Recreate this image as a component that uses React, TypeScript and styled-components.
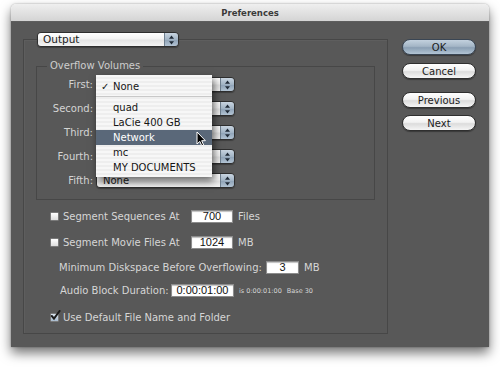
import React from 'react'
import styled, { createGlobalStyle, css } from 'styled-components'

const GlobalStyle = createGlobalStyle`
    html,
    body {
        margin: 0;
        background: #ffffff;
    }

    body {
        font-family: 'DejaVu Sans', 'Noto Sans', sans-serif;
    }
`

// the open menu covers the first four popups, only the last one shows its value
const volumes = [
    ['First:', ''],
    ['Second:', ''],
    ['Third:', ''],
    ['Fourth:', ''],
    ['Fifth:', 'None'],
]

const menuItems = ['quad', 'LaCie 400 GB', 'Network', 'mc', 'MY DOCUMENTS']

function Arrows() {
    return (
        <svg width="7" height="10" viewBox="0 0 7 10">
            <path d="M3.5 0.5 L6 3.8 L1 3.8 Z" fill="#1f2a36" />
            <path d="M3.5 9.5 L6 6.2 L1 6.2 Z" fill="#1f2a36" />
        </svg>
    )
}

function Cursor() {
    return (
        <svg width="11" height="16" viewBox="0 0 11 16">
            <path
                d="M1 1 L1 13 L3.8 10.4 L5.8 14.8 L7.6 14 L5.7 9.7 L9.4 9.7 Z"
                fill="#000"
                stroke="#fff"
                strokeWidth="1"
                strokeLinejoin="round"
            />
        </svg>
    )
}

function CheckMark() {
    return (
        <svg width="11" height="12" viewBox="0 0 11 12">
            <path
                d="M1.8 6 L4 8.6 L9.6 1"
                fill="none"
                stroke="#1b1b1b"
                strokeWidth="2"
                strokeLinecap="round"
            />
        </svg>
    )
}

export default function App() {
    return (
        <Page>
            <GlobalStyle />
            <Window>
                <TitleBar>Preferences</TitleBar>
                <Content>
                    <Main>
                        <Popup $width={142} $size={10.5} $indent={6} $raised>
                            <PopupText>Output</PopupText>
                            <PopupArrow>
                                <Arrows />
                            </PopupArrow>
                        </Popup>
                        <Panel>
                            <GroupBox>
                                <Legend>Overflow Volumes</Legend>
                                <VolumeGrid>
                                    {volumes.map(([label, value], i) => (
                                        <React.Fragment key={label}>
                                            <VolumeLabel>{label}</VolumeLabel>
                                            <VolumeCell>
                                                <Popup $width={139} $size={10} $indent={7}>
                                                    <PopupText>{value}</PopupText>
                                                    <PopupArrow>
                                                        <Arrows />
                                                    </PopupArrow>
                                                </Popup>
                                                {i === 0 && (
                                                    <Menu>
                                                        <MenuItem>
                                                            <Tick>✓</Tick>None
                                                        </MenuItem>
                                                        <MenuSeparator />
                                                        {menuItems.map((item) => (
                                                            <MenuItem
                                                                key={item}
                                                                $active={item === 'Network'}
                                                            >
                                                                {item}
                                                            </MenuItem>
                                                        ))}
                                                        <CursorSpot>
                                                            <Cursor />
                                                        </CursorSpot>
                                                    </Menu>
                                                )}
                                            </VolumeCell>
                                        </React.Fragment>
                                    ))}
                                </VolumeGrid>
                            </GroupBox>

                            <OptionRow $top={10} $indent={14}>
                                <CheckBox />
                                <OptionText $width={128}>Segment Sequences At</OptionText>
                                <Field $width={42}>700</Field>
                                <Unit>Files</Unit>
                            </OptionRow>
                            <OptionRow $top={13} $indent={14}>
                                <CheckBox />
                                <OptionText $width={128}>Segment Movie Files At</OptionText>
                                <Field $width={42}>1024</Field>
                                <Unit>MB</Unit>
                            </OptionRow>
                            <OptionRow $top={12} $indent={23}>
                                <OptionText $width={207}>
                                    Minimum Diskspace Before Overflowing:
                                </OptionText>
                                <Field $width={33}>3</Field>
                                <Unit>MB</Unit>
                            </OptionRow>
                            <OptionRow $top={10} $indent={24}>
                                <OptionText $width={111}>Audio Block Duration:</OptionText>
                                <Field $width={63}>0:00:01:00</Field>
                                <Note>
                                    is 0:00:01:00 <span>Base 30</span>
                                </Note>
                            </OptionRow>
                            <OptionRow $top={14} $indent={14}>
                                <CheckBox $checked>
                                    <CheckMark />
                                </CheckBox>
                                <OptionText>Use Default File Name and Folder</OptionText>
                            </OptionRow>
                        </Panel>
                    </Main>

                    <Side>
                        <AquaButton $default $top={0}>
                            OK
                        </AquaButton>
                        <AquaButton $top={8}>Cancel</AquaButton>
                        <AquaButton $top={13}>Previous</AquaButton>
                        <AquaButton $top={7}>Next</AquaButton>
                    </Side>
                </Content>
            </Window>
        </Page>
    )
}

const Page = styled.div`
    box-sizing: border-box;
    height: 367px;
    padding: 4px 0 0 11px;
    width: 500px;
`

const Window = styled.div`
    border-radius: 5px 5px 0 0;
    box-shadow: 0 6px 12px rgba(0, 0, 0, 0.55), 0 0 2px rgba(0, 0, 0, 0.35);
    display: flex;
    flex-direction: column;
    height: 343px;
    overflow: hidden;
    width: 478px;
`

const TitleBar = styled.div`
    align-items: center;
    background: linear-gradient(#efefef, #d4d4d4);
    border-bottom: 1px solid #5e5e5e;
    box-sizing: border-box;
    color: #3a3a3a;
    display: flex;
    flex-shrink: 0;
    font-size: 8.5px;
    font-weight: bold;
    height: 18px;
    justify-content: center;
    padding-top: 1px;
`

const Content = styled.div`
    background: #585858;
    display: flex;
    flex: 1;
    gap: 14px;
    padding: 10px 13px 13px 12px;
`

const Main = styled.div`
    display: flex;
    flex-direction: column;
    width: 365px;
`

const Popup = styled.div<{
    $width: number
    $size: number
    $indent: number
    $raised?: boolean
}>`
    border: 1px solid #2e2e2e;
    border-radius: 4px;
    box-shadow: 0 1px 1px rgba(0, 0, 0, 0.3);
    box-sizing: border-box;
    color: #1a1a1a;
    display: flex;
    flex-shrink: 0;
    font-size: ${({ $size }) => $size}px;
    height: 15px;
    overflow: hidden;
    width: ${({ $width }) => $width}px;

    & > span:first-child {
        padding-left: ${({ $indent }) => $indent - 1}px;
    }

    ${({ $raised }) =>
        $raised &&
        css`
            margin-left: 14px;
            position: relative;
            z-index: 1;
        `}
`

const PopupText = styled.span`
    align-items: center;
    background: linear-gradient(#ffffff, #f3f3f3 45%, #e4e4e4 55%, #f4f4f4);
    display: flex;
    flex: 1;
    line-height: 13px;
`

const PopupArrow = styled.span`
    align-items: center;
    background: linear-gradient(#c9d5e1, #a2b4c5 50%, #8ea2b6 52%, #b3c4d4);
    border-left: 1px solid #6f7f8f;
    display: flex;
    justify-content: center;
    width: 13px;
`

const Panel = styled.div`
    border: 1px solid #474747;
    box-shadow: inset 1px 1px 0 rgba(255, 255, 255, 0.04);
    display: flex;
    flex: 1;
    flex-direction: column;
    margin-top: -8px;
    padding: 20px 12px 0 12px;
`

const GroupBox = styled.fieldset`
    border: 1px solid #474747;
    margin: 0;
    min-width: 0;
    padding: 5px 0 11px 0;
`

const Legend = styled.legend`
    color: #cdcdcd;
    font-size: 10px;
    line-height: 12px;
    margin-left: 10px;
    padding: 0 3px;
`

const VolumeGrid = styled.div`
    display: grid;
    grid-template-columns: 56px 139px;
    column-gap: 3px;
    row-gap: 9px;
`

const VolumeLabel = styled.div`
    color: #d4d4d4;
    font-size: 10px;
    line-height: 15px;
    text-align: right;
`

const VolumeCell = styled.div`
    position: relative;
`

const Menu = styled.div`
    background: repeating-linear-gradient(#f7f7f7 0 2px, #eeeeee 2px 4px);
    box-shadow: 2px 4px 8px rgba(0, 0, 0, 0.6);
    box-sizing: border-box;
    color: #151515;
    left: 0;
    padding: 4px 0 2px;
    position: absolute;
    top: -2px;
    width: 116px;
    z-index: 2;
`

const MenuItem = styled.div<{ $active?: boolean }>`
    font-size: 10px;
    height: 15px;
    line-height: 15px;
    padding-left: 17px;
    position: relative;
    white-space: nowrap;

    ${({ $active }) =>
        $active &&
        css`
            background: #5a6879;
            color: #ffffff;
        `}
`

const Tick = styled.span`
    font-size: 10px;
    left: 5px;
    position: absolute;
`

const MenuSeparator = styled.div`
    border-top: 1px solid #c8c8c8;
    margin: 2px 0 3px;
`

const CursorSpot = styled.div`
    left: 100px;
    position: absolute;
    top: 56px;
`

const OptionRow = styled.div<{ $top: number; $indent: number }>`
    align-items: center;
    display: flex;
    height: 13px;
    margin-top: ${({ $top }) => $top}px;
    padding-left: ${({ $indent }) => $indent}px;
`

const CheckBox = styled.span<{ $checked?: boolean }>`
    background: linear-gradient(#ffffff, #dcdcdc);
    border: 1px solid #7a7a7a;
    border-radius: 1px;
    box-sizing: border-box;
    flex-shrink: 0;
    height: 9px;
    margin-right: 4px;
    position: relative;
    width: 9px;

    svg {
        left: -1px;
        position: absolute;
        top: -4px;
    }

    ${({ $checked }) =>
        $checked &&
        css`
            background: linear-gradient(#d9e4ef, #a9bccf);
        `}
`

const OptionText = styled.span<{ $width?: number }>`
    color: #d6d6d6;
    font-size: 10px;
    white-space: nowrap;
    ${({ $width }) =>
        $width != null &&
        css`
            width: ${$width}px;
        `}
`

const Field = styled.span<{ $width: number }>`
    background: #ffffff;
    border: 1px solid #8c8c8c;
    box-shadow: inset 0 1px 1px rgba(0, 0, 0, 0.25);
    box-sizing: border-box;
    color: #111111;
    font-family: 'Liberation Sans', Arial, sans-serif;
    font-size: 11px;
    height: 13px;
    line-height: 11px;
    text-align: center;
    width: ${({ $width }) => $width}px;
`

const Unit = styled.span`
    color: #d6d6d6;
    font-size: 10px;
    margin-left: 5px;
`

const Note = styled.span`
    color: #d6d6d6;
    font-size: 6.5px;
    margin-left: 5px;

    span {
        margin-left: 3px;
    }
`

const Side = styled.div`
    display: flex;
    flex-direction: column;
    padding-top: 7px;
    width: 74px;
`

const AquaButton = styled.div<{ $default?: boolean; $top: number }>`
    align-items: center;
    background: linear-gradient(#ffffff, #f2f2f2 45%, #dcdcdc 55%, #f5f5f5);
    border: 1px solid #2f2f2f;
    border-radius: 8px;
    box-shadow: 0 1px 1px rgba(0, 0, 0, 0.35);
    box-sizing: border-box;
    color: #1c1c1c;
    display: flex;
    font-size: 10px;
    height: 16px;
    justify-content: center;
    margin-top: ${({ $top }) => $top}px;

    ${({ $default }) =>
        $default &&
        css`
            background: linear-gradient(#c3d1de, #a4b6c6 45%, #8a9fb3 55%, #b2c4d4);
            border-color: #3a4654;
        `}
`
